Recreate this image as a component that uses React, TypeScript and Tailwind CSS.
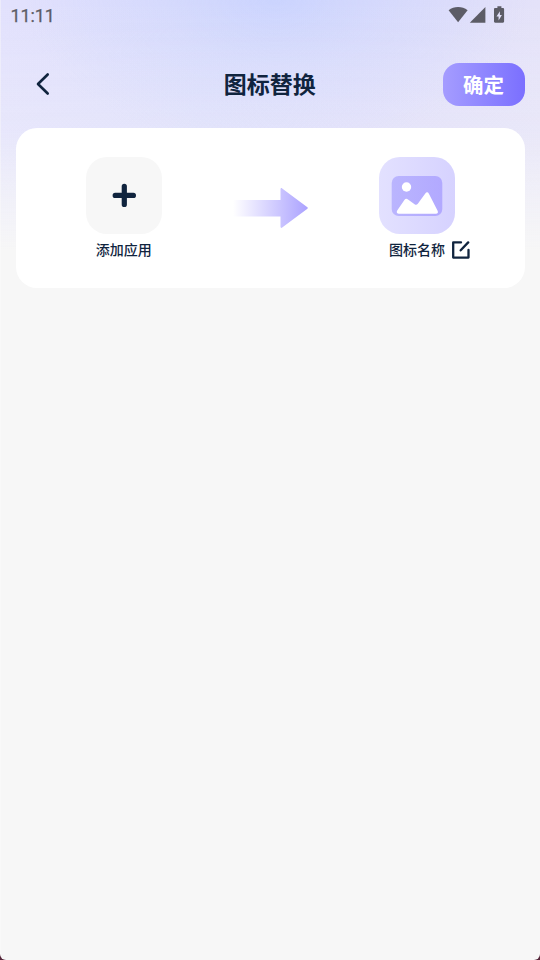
import type { ReactNode } from 'react';

function StatusBar() {
  return (
    <div className="flex h-8 items-center justify-between pl-[9.500px] pr-[34.500px] text-[#5c5c66]">
      <span className="font-[Roboto] text-[18px] leading-8 tracking-[-0.1px] [-webkit-text-stroke:0.25px]">11:11</span>
      <svg className="mb-0.5 h-[18px] w-[58px]" viewBox="0 0 58 18" fill="currentColor">
        <path d="M0.6 4.2C3.4 2 6.6 0.9 10.1 0.9s6.700 1.1 9.500 3.300L10.100 16.200z" />
        <path d="M37.400 1v15.800H21.800z" />
        <path
          fillRule="evenodd"
          d="M49.400 0.300h4v1.600h1.500c.7 0 1.200.5 1.200 1.200v12.500c0 .7-.5 1.200-1.200 1.200h-7.700c-.7 0-1.200-.5-1.200-1.200V3.100c0-.7.5-1.200 1.200-1.200h2.200zM51.900 5.200l-3.400 5.200h2.100v4l3.300-5.300h-2z"
        />
      </svg>
    </div>
  );
}

function Header() {
  return (
    <header className="grid h-[104px] grid-cols-[1fr_auto_1fr] items-center pl-[30px] pr-[15.500px]">
      <button type="button" aria-label="返回" className="w-6">
        <svg className="h-6 w-6" viewBox="0 0 24 24" fill="none" stroke="#10243e" strokeWidth="2.600" strokeLinecap="round" strokeLinejoin="round">
          <path d="M16.700 2.500L7 12l9.700 9.500" />
        </svg>
      </button>
      <h1 className="-mt-0.5 -ml-4 text-[23px] font-bold leading-8">图标替换</h1>
      <button
        type="button"
        className="h-[43px] w-[82px] justify-self-end rounded-2xl bg-linear-to-r from-[#a59cff] to-[#7b6fff] text-[20.5px] font-bold leading-[42px] text-white"
      >
        确定
      </button>
    </header>
  );
}

function IconTile({ className, children }: { className: string; children: ReactNode }) {
  return (
    <div className={`flex h-[76.500px] w-[76.500px] items-center justify-center rounded-[21px] ${className}`}>
      {children}
    </div>
  );
}

function PlusIcon() {
  return (
    <svg className="h-7 w-7" viewBox="0 0 28 28" fill="none" stroke="#10243e" strokeWidth="5.200" strokeLinecap="round">
      <path d="M14.300 5.300v18.200M5.200 14.400h18.200" />
    </svg>
  );
}

function ArrowIcon() {
  return (
    <svg className="h-10 w-[76px]" viewBox="0 0 76 40">
      <defs>
        <linearGradient id="arrow" x1="0" x2="1" y1="0" y2="0">
          <stop offset="0" stopColor="#aba2ff" stopOpacity="0" />
          <stop offset="1" stopColor="#aba2ff" />
        </linearGradient>
      </defs>
      <path
        fill="url(#arrow)"
        d="M0 12h47.500V1.200c0-1 1-1.400 1.700-.8L74.400 19.300c.5.400.5 1 0 1.400L49.200 39.600c-.7.600-1.700.2-1.700-.8V28.500H0z"
      />
    </svg>
  );
}

function PictureIcon() {
  return (
    <svg className="mt-px ml-px h-10 w-[52px]" viewBox="0 0 52 40">
      <defs>
        <linearGradient id="picture" x1="0" x2="1" y1="0" y2="0">
          <stop offset="0" stopColor="#bab5fe" />
          <stop offset="1" stopColor="#b2a9ff" />
        </linearGradient>
      </defs>
      <rect x="0.700" width="50.600" height="40" rx="7" fill="url(#picture)" />
      <circle cx="15.500" cy="11" r="4.700" fill="#fff" />
      <path
        fill="#fff"
        d="M6.200 34.500l7.200-10.600c1-1.400 2.300-1.500 3.600-.5l6.600 4.800c1.200.9 2.300.7 3.200-.5l7.500-10.300c1.100-1.500 2.700-1.400 3.600.3l8.700 17c.8 1.700.1 3-1.700 3H8c-2 0-2.900-1.500-1.800-3.200z"
      />
    </svg>
  );
}

function EditIcon() {
  return (
    <svg className="mt-0.5 h-[18px] w-[18px]" viewBox="0 0 18 18" fill="none" stroke="#10243e" strokeWidth="2.300" strokeLinecap="round" strokeLinejoin="round">
      <path d="M9 1.400H1.200v15.200h15.300V9M8.700 9.300l7.500-7.900" />
    </svg>
  );
}

export default function App() {
  return (
    <div className="h-[960px] w-[540px] overflow-hidden bg-[#55263a] font-['Noto_Sans_CJK_SC',sans-serif] text-[#10243e]">
      <div className="h-full rounded-b-[6px] border-l border-white/30 bg-[#f7f7f7] bg-[linear-gradient(to_bottom,#f7f7f700_0,#f7f7f720_60px,#f7f7f744_130px,#f7f7f7_250px),radial-gradient(ellipse_250px_150px_at_275px_0,#cbd4fe_0,#d2d8fdaa_45%,#dcdcfd00_100%),linear-gradient(to_right,#e2e1fd_0,#dcddfc_200px,#dedcfb_360px,#e4e2f9_540px)]">
        <StatusBar />
        <Header />
        <main className="mr-[15.500px] ml-[14.500px] -mt-[8.500px] flex h-[160.500px] items-start rounded-[21px] bg-white pt-[29.500px] pl-[70px]">
          <div className="flex w-[76.500px] flex-col items-center">
            <IconTile className="bg-[#f7f7f7]">
              <PlusIcon />
            </IconTile>
            <span className="mt-[5px] text-sm font-medium">添加应用</span>
          </div>
          <div className="mt-[31px] ml-[70.500px]">
            <ArrowIcon />
          </div>
          <div className="ml-[70px]">
            <IconTile className="bg-linear-to-r from-[#e3e1ff] to-[#d6d2ff]">
              <PictureIcon />
            </IconTile>
            <div className="mt-[5px] ml-[10.500px] flex items-center gap-[6.500px]">
              <span className="text-sm font-medium">图标名称</span>
              <EditIcon />
            </div>
          </div>
        </main>
      </div>
    </div>
  );
}
